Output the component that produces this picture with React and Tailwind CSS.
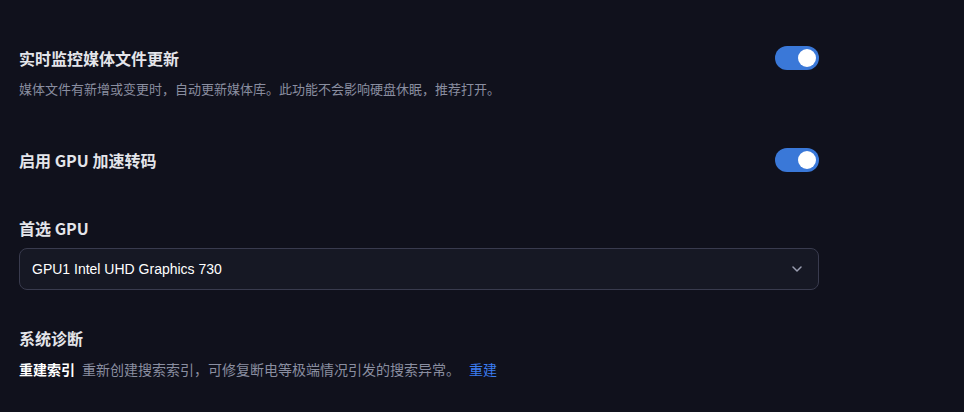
import React, { useState } from "react";

const cjk = { fontFamily: '"Noto Sans CJK SC", "Noto Sans", sans-serif' };

const Toggle = ({ on, onChange }) => (
  <button
    type="button"
    onClick={() => onChange(!on)}
    className={`flex h-6 w-11 shrink-0 items-center rounded-full px-[3px] transition ${
      on ? "justify-end bg-[#3a78d8]" : "justify-start bg-[#3a3d4f]"
    }`}
  >
    <span className="h-[18px] w-[18px] rounded-full bg-white" />
  </button>
);

export default function App() {
  const [watch, setWatch] = useState(true);
  const [gpu, setGpu] = useState(true);

  return (
    <div className="min-h-[412px] w-full bg-[#10111c] text-[#e4e5ea]" style={cjk}>
      <div className="ml-[19px] w-[800px] pt-[46px]">
        <div className="flex items-center justify-between">
          <h3 className="text-[16px] font-bold leading-6">实时监控媒体文件更新</h3>
          <Toggle on={watch} onChange={setWatch} />
        </div>
        <p className="mt-[9px] text-[13px] leading-5 text-[#8a8ea0]">
          媒体文件有新增或变更时，自动更新媒体库。此功能不会影响硬盘休眠，推荐打开。
        </p>

        <div className="mt-[49px] flex items-center justify-between">
          <h3 className="text-[16px] font-bold leading-6">启用 GPU 加速转码</h3>
          <Toggle on={gpu} onChange={setGpu} />
        </div>

        <h3 className="mt-[44px] text-[16px] font-bold leading-6">首选 GPU</h3>
        <button
          type="button"
          className="mt-2 flex h-[42px] w-full items-center justify-between rounded-lg border border-[#393b4e] bg-[#161824] pl-3 pr-4 text-left"
        >
          <span className="text-[14px] text-white" style={{ fontFamily: '"Liberation Sans", Arial, sans-serif' }}>
            GPU1 Intel UHD Graphics 730
          </span>
          <svg width="10" height="6" viewBox="0 0 10 6" fill="none" className="text-[#9a9db0]">
            <path d="M1 1l4 4 4-4" stroke="currentColor" strokeWidth="1.5" strokeLinecap="round" strokeLinejoin="round" />
          </svg>
        </button>

        <h3 className="mt-[36px] text-[16px] font-bold leading-6">系统诊断</h3>
        <div className="mt-2 flex items-center text-[14px] leading-[22px]">
          <span className="font-bold text-white">重建索引</span>
          <span className="ml-[7px] text-[#8a8ea0]">重新创建搜索索引，可修复断电等极端情况引发的搜索异常。</span>
          <button type="button" className="ml-[9px] text-[#3b7cf0]">重建</button>
        </div>
      </div>
    </div>
  );
}
